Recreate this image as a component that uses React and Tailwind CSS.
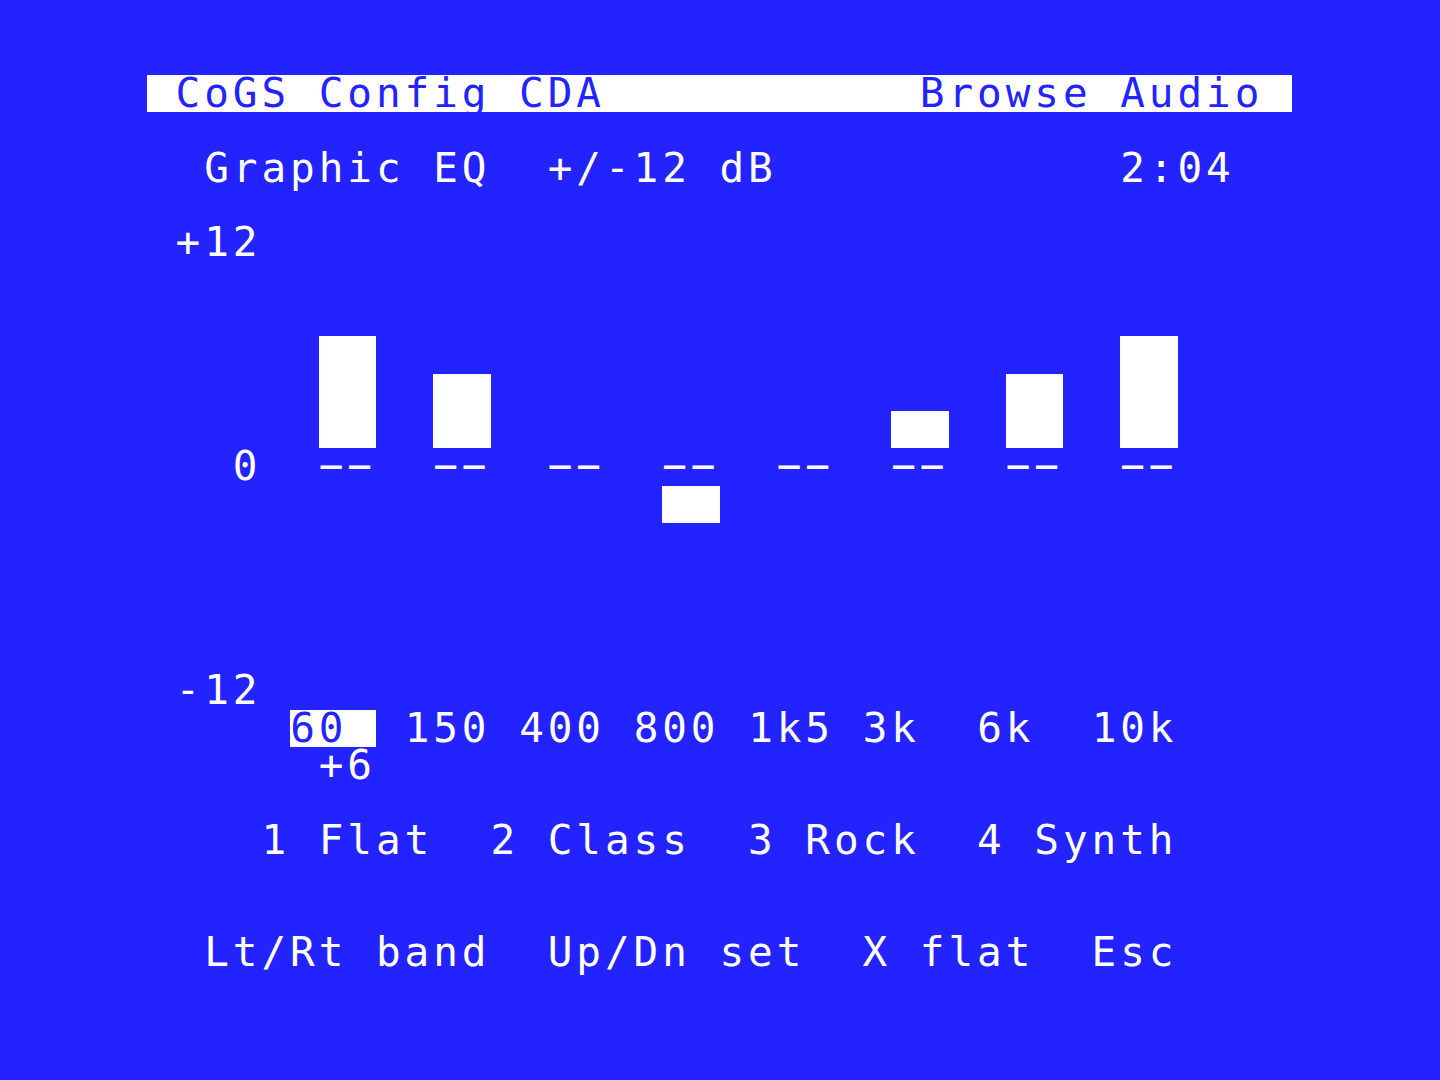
const BANDS = [
  { label: '60', db: 6 },
  { label: '150', db: 4 },
  { label: '400', db: 0 },
  { label: '800', db: -2 },
  { label: '1k5', db: 0 },
  { label: '3k', db: 2 },
  { label: '6k', db: 4 },
  { label: '10k', db: 6 },
]

const SELECTED = 0

// one text row of the 40 x 24 screen; segs = [text, inverse]
function Row({ segs = [] }) {
  return (
    <div className="flex h-[37.33px]">
      {segs.map(([text, inv], i) => (
        <span
          key={i}
          className={`block h-[37.33px] whitespace-pre ${inv ? 'bg-white text-[#2323ff]' : 'text-white'}`}
        >
          {text}
        </span>
      ))}
    </div>
  )
}

// bar rows: row 10 is the zero line, 2 dB per row
function barRow(r) {
  const segs = [['      ', false]]
  BANDS.forEach((b, i) => {
    const steps = b.db / 2
    const filled = r < 10 ? steps >= 10 - r && steps > 0 : -steps >= r - 10 && steps < 0
    segs.push(['  ', filled])
    if (i < BANDS.length - 1) segs.push(['  ', false])
  })
  return segs
}

function labelRow() {
  const segs = [['     ', false]]
  BANDS.forEach((b, i) => {
    const cell = b.label.padEnd(3, ' ')
    segs.push([cell, i === SELECTED])
    if (i < BANDS.length - 1) segs.push([' ', false])
  })
  return segs
}

export default function App() {
  const sel = BANDS[SELECTED]
  const selText = (sel.db > 0 ? '+' : '') + sel.db
  const rows = []
  for (let r = 0; r < 24; r++) rows.push([])

  rows[0] = [[' CoGS Config CDA           Browse Audio ', true]]
  rows[2] = [['  Graphic EQ  +/-12 dB            2:04', false]]
  rows[4] = [[' +12', false]]
  for (let r = 5; r < 10; r++) rows[r] = barRow(r)
  rows[10] = [['   0' + BANDS.map(() => '  \u2212\u2212').join(''), false]]
  for (let r = 11; r < 16; r++) rows[r] = barRow(r)
  rows[16] = [[' -12', false]]
  rows[17] = labelRow()
  rows[18] = [[' '.repeat(6 + SELECTED * 4) + selText, false]]
  rows[20] = [['    1 Flat  2 Class  3 Rock  4 Synth', false]]
  rows[23] = [['  Lt/Rt band  Up/Dn set  X flat  Esc', false]]

  return (
    <div className="min-h-screen w-full bg-[#2323ff] pt-[75px] pl-[147px] font-['DejaVu_Sans_Mono',monospace] text-[41px] leading-[37.33px] tracking-[3.94px]">
      <div className="w-[1145px]">
        {rows.map((segs, i) => (
          <Row key={i} segs={segs} />
        ))}
      </div>
    </div>
  )
}
